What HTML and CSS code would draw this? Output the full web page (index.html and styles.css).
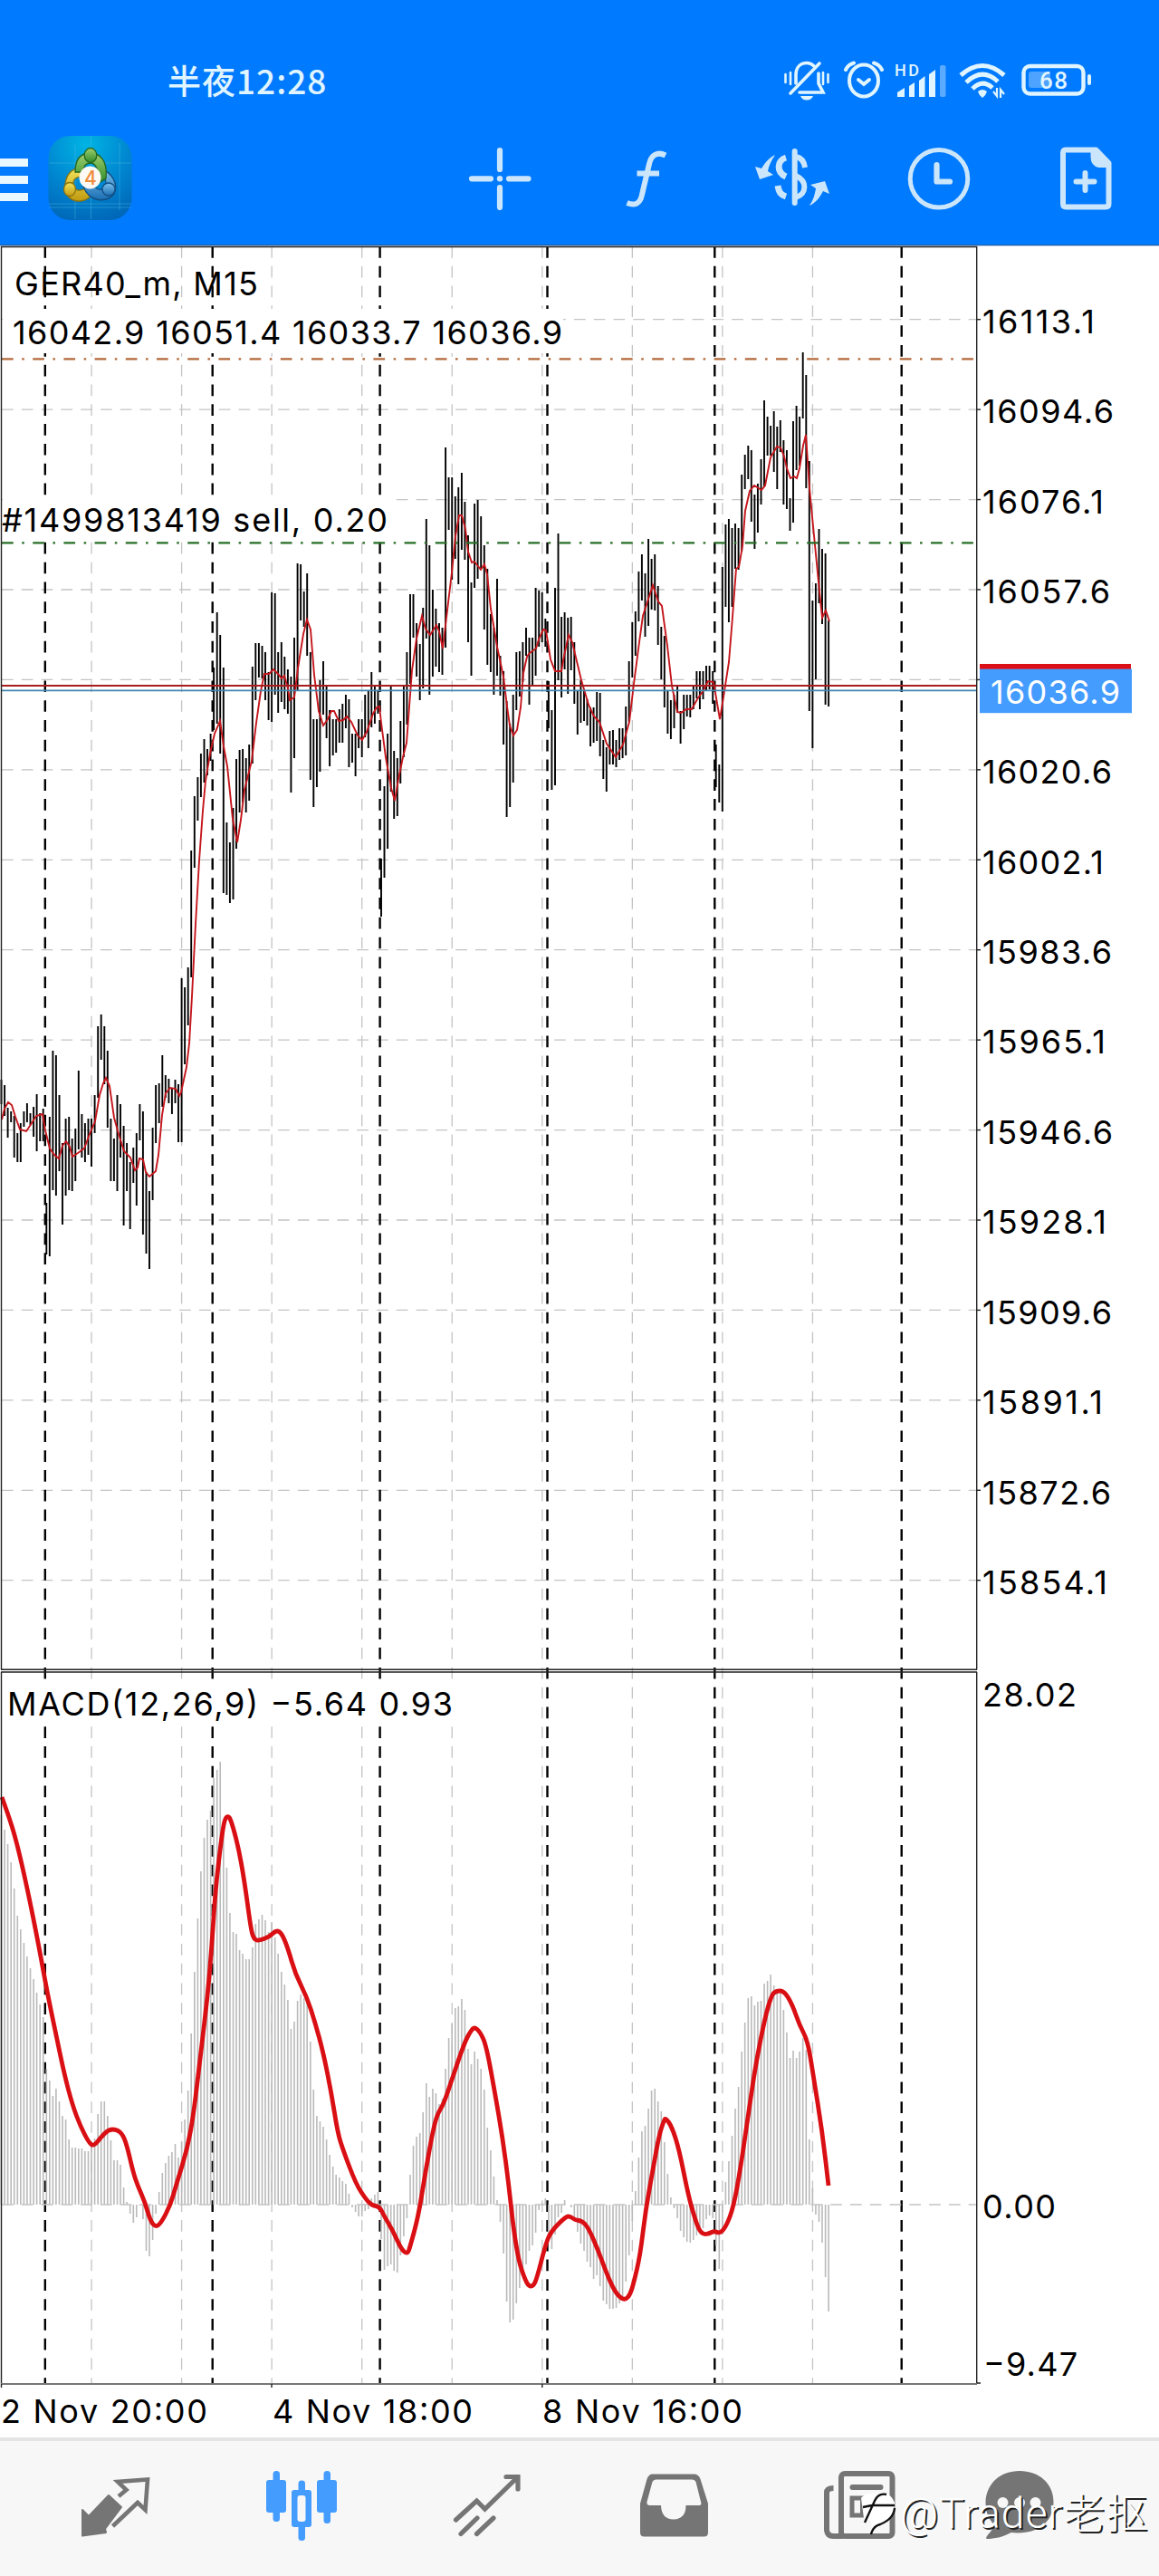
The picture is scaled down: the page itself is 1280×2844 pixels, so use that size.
FILE: index.html
```html
<!DOCTYPE html>
<html lang="zh-CN">
<head>
  <meta charset="UTF-8">
  <meta name="viewport" content="width=device-width, initial-scale=1.0">
  <title>GER40_m, M15</title>
  <link rel="stylesheet" href="styles.css">
</head>
<body>
  <!-- Header -->
  <header class="header">
    <div class="status-bar">
      <span class="time">半夜12:28</span>
      <div class="status-icons">
        <!-- Muted bell -->
        <svg width="55" height="46" viewBox="864 66 55 46">
          <g fill="none" stroke="#e0f5ff" stroke-width="3.6" stroke-linecap="round">
            <path d="M905 70 L873 103"/>
            <path d="M879 92 V83 C879 74 884 69.500 891 69.500 C894 69.500 897 71 899 73"/>
            <path d="M904 81 V92 L909 102 H883"/>
            <path stroke-width="2.600" d="M867.500 82 V91 M873 80 V93 M909 80 V93 M914.500 82 V91"/>
          </g>
          <path fill="#e0f5ff" d="M884 106 H898 Q896 110.500 891 110.500 Q886 110.500 884 106Z"/>
        </svg>
        <!-- Alarm -->
        <svg width="45" height="46" viewBox="931 66 45 46">
          <g fill="none" stroke="#e0f5ff" stroke-width="4" stroke-linecap="round">
            <ellipse cx="954" cy="89" rx="16" ry="17.500"/>
            <path d="M934 77 Q937 71 943 69.500 M974 77 Q971 71 965 69.500"/>
            <path d="M948 88 L954 93 L960 88"/>
          </g>
        </svg>
        <!-- Signal -->
        <svg width="58" height="46" viewBox="988 66 58 46">
          <text class="hd" x="988" y="84" textLength="27">HD</text>
          <g fill="#e0f5ff">
            <path d="M991 107 V102 L999 97 V107Z"/>
            <path d="M1004 107 V95 L1010 91 V107Z"/>
            <path d="M1015 107 V89 L1021.500 84 V107Z"/>
            <path d="M1026 107 V82 L1033 77 V107Z"/>
            <rect x="1038" y="72" width="6.500" height="35" rx="2" opacity=".4"/>
          </g>
        </svg>
        <!-- Wifi -->
        <svg width="56" height="46" viewBox="1058 66 56 46">
          <g fill="none" stroke="#e0f5ff" stroke-width="5">
            <path d="M1061 83 Q1085 62 1109 83"/>
            <path d="M1067 91 Q1085 74 1102 90"/>
            <path d="M1074 98 Q1085 87 1096 97"/>
          </g>
          <path fill="#e0f5ff" d="M1080 101 Q1085 97 1090 101 Q1089 105 1085 108 Q1081 105 1080 101Z"/>
          <path fill="none" stroke="#e0f5ff" stroke-width="2.200" d="M1097 101 L1101 106 V97 M1105 108 V99 L1109 104"/>
        </svg>
        <!-- Battery -->
        <svg width="80" height="46" viewBox="1126 66 80 46">
          <rect x="1136" y="79" width="24" height="18" rx="3" fill="#4da3ff"/>
          <rect x="1130.500" y="73" width="66" height="30.500" rx="7" fill="none" stroke="#e0f5ff" stroke-width="4.400"/>
          <rect x="1201" y="82" width="4" height="12" rx="2" fill="#e0f5ff"/>
          <text class="battery-level" x="1148" y="98" textLength="31">68</text>
        </svg>
      </div>
    </div>

    <div class="toolbar">
      <svg class="menu" width="31" height="94" viewBox="0 150 31 94">
        <path fill="#e9f7ff" d="M0 175 H31 V184 H0Z M0 194 H31 V203 H0Z M0 213 H31 V222 H0Z"/>
      </svg>
      <!-- MetaTrader logo -->
      <svg width="94" height="94" viewBox="53 150 94 94">
        <defs>
          <radialGradient id="tile" cx=".45" cy=".1" r="1">
            <stop offset="0" stop-color="#00b4e4"/>
            <stop offset=".55" stop-color="#0084cf"/>
            <stop offset="1" stop-color="#0063b4"/>
          </radialGradient>
          <linearGradient id="green" x1="0" y1="0" x2="0" y2="1"><stop offset="0" stop-color="#a2d070"/><stop offset="1" stop-color="#2f8a28"/></linearGradient>
          <linearGradient id="yellow" x1="0" y1="0" x2="0" y2="1"><stop offset="0" stop-color="#f2e45c"/><stop offset="1" stop-color="#c29a10"/></linearGradient>
          <linearGradient id="blue" x1="0" y1="0" x2="0" y2="1"><stop offset="0" stop-color="#7cc4ee"/><stop offset="1" stop-color="#1c6fb4"/></linearGradient>
        </defs>
        <rect x="53.500" y="150" width="92" height="93" rx="24" fill="url(#tile)"/>
        <path stroke="#4fc0e8" stroke-opacity=".4" fill="none" d="M83 160 V242 M100.500 150 V242 M132 158 V232 M54 180 H145 M54 229 H145 M54 225 H145"/>
        <g stroke-width="1.300">
          <path fill="url(#yellow)" stroke="#8b7410" d="M92 185 C78 185 71 194 72 210 C76 224 90 225 100 217 L96 207 C88 212 82 211 81 204 C80 197 86 194 94 195Z"/>
          <path fill="url(#blue)" stroke="#134e84" d="M112 187 C124 190 131 204 126 214 C118 224 99 224 92 206 L103 203 C108 213 117 210 117 203 C117 197 115 195 110 195Z"/>
          <path fill="url(#green)" stroke="#25661f" d="M83 190 C83 175 90 169 100 169 C111 169 119 178 117 197 L109 202 C109 186 106 180 100 180 C93 180 92 185 92 190Z"/>
          <ellipse cx="100" cy="171.500" rx="6.800" ry="8" fill="url(#green)" stroke="#25661f"/>
          <ellipse cx="77" cy="209" rx="6.500" ry="7.500" fill="url(#yellow)" stroke="#8b7410"/>
          <ellipse cx="120" cy="209" rx="7" ry="7" fill="url(#blue)" stroke="#134e84"/>
        </g>
        <ellipse cx="99.500" cy="196" rx="12" ry="12.500" fill="#fdfaf5"/>
        <text class="logo-digit" x="93" y="204">4</text>
      </svg>

      <div class="tools">
        <div class="tool">
          <svg width="70" height="70" viewBox="517 161 70 70">
            <path stroke="#cbe6fb" stroke-width="6.200" stroke-linecap="round" d="M552 165 V186 M552 206 V228 M521 196.300 H542 M562 196.300 H583.500"/>
            <circle cx="552" cy="196.300" r="3.200" fill="#cbe6fb"/>
          </svg>
        </div>
        <div class="tool">
          <svg width="48" height="70" viewBox="690 161 48 70">
            <path fill="none" stroke="#cbe6fb" stroke-width="6" d="M735 170.500 C726 166 719 170 717 180 L709 214 C707 224 701 226.500 692.500 223"/>
            <path stroke="#cbe6fb" stroke-width="6" d="M703.500 190.500 H728"/>
          </svg>
        </div>
        <div class="tool">
          <svg width="84" height="70" viewBox="834 161 84 70">
            <g fill="none" stroke="#cbe6fb">
              <path stroke-width="6" stroke-linecap="round" d="M878.700 166 V223"/>
              <path stroke-width="7" d="M869 173 C859 176 858 189 869 194 M860 204 C861 211 863 214 869 216"/>
              <path stroke-width="6" d="M880 172 C886 173 889 177 890 184 M880 193 C893 199 892 213 880 217"/>
            </g>
            <path fill="#cbe6fb" d="M857 170 C850 173 845 180 842 185 L835 183 L840 197 L855 192 L849 188 C850 182 853 176 857 170Z"/>
            <path fill="#cbe6fb" d="M895 226 C902 223 907 216 910 210 L917 213 L912 199 L896 203 L902 207 C901 214 899 220 895 226Z"/>
          </svg>
        </div>
        <div class="tool">
          <svg width="72" height="70" viewBox="1001 161 72 70">
            <circle cx="1037" cy="196.300" r="31.800" fill="none" stroke="#cbe6fb" stroke-width="5"/>
            <path fill="none" stroke="#cbe6fb" stroke-width="6.200" stroke-linecap="round" stroke-linejoin="round" d="M1034.500 181 V199.500 H1049"/>
          </svg>
        </div>
        <div class="tool">
          <svg width="58" height="70" viewBox="1170.500 161 58 70">
            <path fill="none" stroke="#cbe6fb" stroke-width="6" stroke-linejoin="round" d="M1177 164.500 H1211 L1225 179 V224 Q1225 227.500 1221.500 227.500 H1178 Q1174.500 227.500 1174.500 224 V168 Q1174.500 164.500 1177 164.500Z"/>
            <path fill="#cbe6fb" d="M1205 164 H1212 L1227 179 V184 H1214 Q1205 182 1205 172Z"/>
            <path stroke="#cbe6fb" stroke-width="6" stroke-linecap="round" d="M1199 190 V209 M1189 199.500 H1209"/>
          </svg>
        </div>
      </div>
    </div>
  </header>

  <!-- Chart -->
  <main class="chart">
    <svg id="plot" width="1280" height="2421" viewBox="0 270 1280 2421">
      <rect class="header-edge" x="0" y="270" width="1280" height="1.300"/>
      <g id="grid"></g>

      <!-- Labels on the price window -->
      <rect class="label-bg" x="3" y="341" width="619" height="49"/>
      <rect class="label-bg" x="3" y="547" width="430" height="49"/>
      <rect class="label-bg" x="3" y="1854" width="502" height="52"/>
      <text class="label" x="16" y="325.500" textLength="269">GER40_m, M15</text>
      <text class="label" x="14" y="380" textLength="607">16042.9 16051.4 16033.7 16036.9</text>
      <text class="label" x="2" y="586.500" textLength="426">#1499813419 sell, 0.20</text>
      <text class="label" x="8" y="1893.500" textLength="492">MACD(12,26,9) −5.64 0.93</text>

      <path class="histogram" id="histogram"/>
      <path class="grid-line" stroke-dasharray="12.7 9.090" d="M2 2434 H1079"/>
      <path class="bars" id="bars"/>
      <polyline class="ma" points="2,1236 5,1224 9,1217 13,1220 17,1233 22,1247 29,1249 35,1240 40,1232 47,1230 50,1248 55,1268 60,1275 65,1279 69,1265 73,1260 77,1266 80,1277 86,1273 93,1268 99,1252 105,1238 110,1209 114,1196 117,1190 121,1199 126,1234 131,1252 137,1271 144,1278 149,1292 152,1289 154,1279 158,1280 161,1294 165,1299 172,1293 175,1275 179,1231 183,1207 188,1201 194,1202 198,1210 200,1206 206,1178 209,1152 212,1100 216,1020 220,950 224,895 227,862 232,832 237,810 243,796 247,824 251,846 257,904 262,930 266,905 270,872 275,852 278,840 283,798 288,763 292,744 297,744 302,739 307,744 311,749 314,746 318,760 320,773 325,770 329,738 335,700 339,684 343,695 347,745 352,785 357,801 362,794 366,785 369,785 374,796 379,795 383,791 388,797 395,812 400,817 405,808 412,788 416,781 419,780 421,798 426,836 432,870 436,884 440,860 445,836 449,820 452,780 455,740 460,705 466,680 470,694 475,701 482,690 485,697 489,716 493,682 499,632 503,592 507,569 510,569 514,584 517,609 521,621 524,620 531,629 535,623 538,634 542,672 549,714 556,747 560,780 563,801 567,812 571,806 575,781 578,743 582,725 585,721 592,716 595,706 600,695 603,696 608,728 613,741 620,741 623,724 628,701 632,709 642,751 650,778 656,791 662,797 670,821 680,836 688,822 695,797 700,755 706,709 710,680 721,646 727,664 731,669 737,713 742,757 748,786 752,787 758,783 764,783 770,772 777,762 782,752 788,753 795,794 798,776 805,731 809,681 813,628 816,626 820,603 823,564 828,542 833,536 841,541 845,536 851,505 858,493 862,494 866,504 869,517 873,528 877,526 880,528 883,517 887,492 890,480 894,539 898,581 905,653 908,682 912,674 916,686"/>
      <path class="signal" id="signal"/>

      <!-- Order and quote levels -->
      <path class="stop-level" d="M2 396.300 H1076"/>
      <path class="order-level" d="M2 599.300 H1076"/>
      <path class="ask" d="M2 757 H1079"/>
      <path class="bid" d="M2 762.300 H1079"/>

      <!-- Frames -->
      <path class="frame" d="M1.500 1843.200 V272.500 H1078.700 V1843.200 M1.500 2632 V1846 M1078.700 1846 V2632"/>
      <path class="frame" d="M1 1843.200 H1079 M1 1846 H1079"/>
      <path class="frame-bottom" d="M1 2632 H1079"/>
      <path class="frame" d="M1.500 2632 V2636 M300 2632 V2636 M598.800 2632 V2636 M1079 2631 H1083"/>

      <!-- Price axis -->
      <g id="axis"></g>
      <rect x="1082" y="733" width="167" height="6" fill="#db1017"/>
      <rect x="1082" y="738.600" width="168" height="48.600" fill="#449cff"/>
      <text class="label quote" x="1094" y="777" textLength="143">16036.9</text>
      <text class="label" x="1085" y="1884" textLength="104">28.02</text>
      <text class="label" x="1085" y="2449" textLength="81">0.00</text>
      <text class="label" x="1086" y="2622.500" textLength="104">−9.47</text>

      <!-- Time axis -->
      <text class="label" x="1" y="2674.500" textLength="228">2 Nov 20:00</text>
      <text class="label" x="301" y="2674.500" textLength="221">4 Nov 18:00</text>
      <text class="label" x="599" y="2674.500" textLength="221">8 Nov 16:00</text>
    </svg>
  </main>

  <!-- Bottom navigation -->
  <nav class="nav">
    <div class="nav-item">
      <svg width="78" height="80" viewBox="89 2726 78 80">
        <path fill="#757575" stroke="#757575" stroke-width="2" stroke-linejoin="round" d="M120 2755 L134 2768 L116 2792 L117 2796 L91 2799.500 V2771 L98 2778Z"/>
        <path fill="none" stroke="#757575" stroke-width="4.600" d="M131 2756 L139.500 2749 L130 2740 L163 2737.500 L160.500 2771 L152 2763 L124.500 2789"/>
      </svg>
    </div>
    <div class="nav-item">
      <svg width="80" height="80" viewBox="292.500 2726 80 80">
        <g fill="#449cff">
          <rect x="293.500" y="2738" width="22" height="36" rx="3"/>
          <rect x="301" y="2728" width="7.500" height="56" rx="3.500"/>
          <rect x="349.500" y="2738" width="22" height="36" rx="3"/>
          <rect x="357" y="2728" width="7.500" height="58" rx="3.500"/>
          <rect x="321.500" y="2749" width="22" height="41" rx="3"/>
          <rect x="329" y="2738.500" width="7.500" height="66.500" rx="3.500"/>
        </g>
        <rect x="328" y="2755" width="9" height="29" rx="3" fill="#f7f7f7"/>
      </svg>
    </div>
    <div class="nav-item">
      <svg width="78" height="80" viewBox="499 2726 78 80">
        <path fill="none" stroke="#757575" stroke-width="5.200" stroke-linecap="round" d="M503.500 2782 L526.500 2761 L535.500 2770 L571.500 2735 M559 2734.500 H572 V2748 M509 2797.500 L527 2780 M526.500 2797.500 L545 2780"/>
      </svg>
    </div>
    <div class="nav-item">
      <svg width="78" height="80" viewBox="704.500 2726 78 80">
        <path fill="#757575" fill-rule="evenodd" d="M720 2731.500 H766 Q771 2731.500 773 2737 L781.500 2764 V2796 Q781.500 2800.500 777 2800.500 H711 Q706.500 2800.500 706.500 2796 V2764 L714 2737 Q716 2731.500 720 2731.500Z M724 2737.500 Q721 2737.500 720 2740 L714 2762 Q713.500 2766 717 2766 H729.500 Q730 2781.500 743.500 2781.500 Q757 2781 757 2766 H771 Q775 2766 773.500 2762 L768 2740 Q767 2737.500 764 2737.500Z"/>
      </svg>
    </div>
    <div class="nav-item">
      <svg width="80" height="80" viewBox="909.500 2726 80 80">
        <g fill="none" stroke="#757575" stroke-width="6">
          <rect x="929.500" y="2731" width="56.500" height="69" rx="4"/>
          <path d="M921 2747 Q913.500 2747 913.500 2752 V2793 Q914 2800 921 2800 H932"/>
          <path stroke-linecap="round" d="M942 2746 H973"/>
          <path stroke-width="5" d="M941.500 2758 H953 V2777 H941.500Z M960 2759 H975 M960 2769 H975"/>
        </g>
      </svg>
    </div>
    <div class="nav-item nav-item-last">
      <svg width="78" height="80" viewBox="1087.500 2726 78 80">
        <path fill="#757575" d="M1126.500 2728 C1148 2728 1164 2742 1164 2762 C1164 2787 1143 2799 1117 2796 C1108 2801 1099 2803 1090 2803 C1088 2800 1098 2794 1098 2787 C1091 2779 1089 2772 1089 2762 C1090 2742 1105 2728 1126.500 2728Z"/>
        <g fill="#f7f7f7"><circle cx="1108" cy="2763" r="6"/><circle cx="1126.500" cy="2763" r="6"/><circle cx="1144" cy="2763" r="6"/></g>
      </svg>
    </div>

    <div class="watermark">
      <svg width="44" height="52" viewBox="950 2754 44 52">
        <path fill="#fff" d="M951 2763 Q955 2757 972 2757 Q984 2757 988 2768 Q988 2784 973 2793 L963 2797 L962 2788 L954 2785Z"/>
        <path fill="none" stroke="#111" stroke-width="2.400" d="M979 2759 Q970 2757 966 2766 L955 2790 M953 2773 L963 2771 H988 M988 2774 Q987 2786 972 2792 Q964 2794 962 2803"/>
      </svg>
      <span class="watermark-name">@Trader老抠</span>
    </div>
  </nav>

  <script src="chart.js"></script>
</body>
</html>
```

FILE: styles.css
```css
/* General styling */
body {
  margin: 0;
  width: 1280px;
  background-color: #fff;
  font-family: Inter, "Noto Sans CJK SC", sans-serif;
  color: #000;
}

svg {
  display: block;
  flex: none;
}

/* Header */
.header {
  height: 270px;
  background-color: #007aff;
  box-sizing: border-box;
  padding-top: 66px;
}

.status-bar {
  display: flex;
  justify-content: space-between;
  align-items: center;
  height: 46px;
  padding: 0 74px 0 185px;
}

.time {
  font-family: "Noto Sans CJK SC", sans-serif;
  font-size: 37px;
  font-weight: 500;
  line-height: 42px;
  color: #e0f5ff;
  letter-spacing: 1px;
  margin-top: -3px;
}

.status-icons {
  display: flex;
  gap: 12px;
}

.hd {
  font-family: Roboto, sans-serif;
  font-size: 18px;
  font-weight: 500;
  fill: #e0f5ff;
}

.battery-level {
  font-family: Roboto, sans-serif;
  font-size: 26px;
  font-weight: 500;
  fill: #e0f5ff;
}

.toolbar {
  display: flex;
  align-items: center;
  margin-top: 38px;
  height: 94px;
}

.menu {
  margin-right: 22px;
}

.logo-digit {
  font-size: 21px;
  font-weight: 500;
  fill: #f08a3c;
}

.tools {
  display: flex;
  margin-left: 324px;
}

.tool {
  width: 161.8px;
  display: flex;
  justify-content: center;
}

/* Chart */
.chart {
  height: 2421px;
}

.label {
  font-family: Inter, sans-serif;
  font-size: 36px;
  fill: #000;
}

.quote {
  fill: #fff;
}

.label-bg {
  fill: #fff;
}

.header-edge {
  fill: #1c62b0;
}

.grid-line {
  fill: none;
  stroke: #c4c4c4;
  stroke-width: 1.3;
}

.day-line {
  fill: none;
  stroke: #000;
  stroke-width: 2.4;
}

.frame {
  fill: none;
  stroke: #222;
  stroke-width: 1.4;
}

.frame-bottom {
  stroke: #777;
  stroke-width: 2;
}

.bars {
  stroke: #000;
  stroke-width: 1.9;
}

.ma {
  fill: none;
  stroke: #c4161c;
  stroke-width: 1.9;
}

.histogram {
  stroke: #bababa;
  stroke-width: 1.6;
}

.signal {
  fill: none;
  stroke: #d90f14;
  stroke-width: 4.8;
  stroke-linejoin: round;
}

.stop-level,
.order-level {
  fill: none;
  stroke-width: 2.2;
  stroke-dasharray: 12.7 9.5 2.6 9.4;
}

.stop-level {
  stroke: #b3683a;
}

.order-level {
  stroke: #266e26;
}

.ask {
  stroke: #a81c20;
  stroke-width: 2;
}

.bid {
  stroke: #3f86b0;
  stroke-width: 1.8;
}

/* Bottom navigation */
.nav {
  position: relative;
  display: flex;
  height: 153px;
  box-sizing: border-box;
  border-top: 4px solid #e4e4e4;
  background-color: #f7f7f7;
  padding: 31px 0 0 25px;
}

.nav-item {
  width: 205.4px;
  display: flex;
  justify-content: center;
}

.nav-item-last {
  width: 149px;
}

/* Author mark over the last two tabs */
.watermark {
  position: absolute;
  left: 950px;
  top: 50px;
  display: flex;
  align-items: center;
}

.watermark-name {
  font-family: Roboto, "Noto Sans CJK SC", sans-serif;
  font-size: 46px;
  font-weight: 300;
  line-height: 60px;
  letter-spacing: 1.2px;
  color: #fff;
  text-shadow: 2px 2px 0 #222;
  white-space: nowrap;
}
```

FILE: chart.js
```js
const NS = 'http://www.w3.org/2000/svg';
const LEFT = 1.5;
const STEP = 3.555;
const ZERO = 2434;

// top and bottom of every bar
const bars = [
  [1192,1219],[1198,1232],[1223,1256],[1227,1239],[1232,1278],[1251,1283],[1240,1283],[1227,1244],[1218,1239],[1229,1242],
  [1222,1255],[1208,1271],[1229,1260],[1224,1260],[1328,1385],[1233,1387],[1160,1314],[1165,1320],[1209,1293],[1262,1352],
  [1235,1320],[1233,1314],[1257,1315],[1246,1304],[1182,1269],[1230,1278],[1240,1283],[1235,1275],[1235,1288],[1209,1251],
  [1133,1212],[1120,1170],[1133,1197],[1160,1245],[1235,1304],[1257,1304],[1209,1315],[1219,1278],[1243,1353],[1262,1315],
  [1283,1357],[1267,1306],[1251,1331],[1219,1259],[1227,1363],[1294,1384],[1315,1401],[1245,1325],[1198,1262],[1196,1240],
  [1165,1222],[1187,1212],[1191,1218],[1201,1230],[1192,1218],[1197,1261],[1080,1261],[1090,1175],[1068,1132],[939,1079],
  [879,958],[858,906],[832,880],[816,864],[827,856],[810,840],[737,806],[676,799],[701,832],[737,986],
  [908,988],[930,997],[892,993],[838,937],[828,897],[827,886],[837,897],[822,884],[736,843],[710,773],
  [710,748],[713,749],[720,773],[742,795],[654,797],[655,767],[720,787],[709,775],[725,783],[739,788],
  [747,875],[704,837],[622,762],[623,685],[653,692],[633,724],[720,861],[794,891],[794,869],[751,852],
  [730,789],[757,815],[784,846],[794,834],[794,831],[783,820],[777,820],[767,804],[772,847],[810,842],
  [810,857],[794,826],[794,836],[767,814],[762,826],[742,803],[757,799],[762,788],[948,1012],[868,969],
  [810,937],[756,874],[829,904],[837,901],[796,865],[757,836],[720,800],[656,755],[656,704],[688,747],
  [711,773],[671,760],[573,705],[602,767],[651,747],[672,736],[688,742],[693,745],[494,715],[527,585],
  [527,640],[548,617],[538,645],[522,607],[554,618],[591,709],[643,746],[556,649],[552,639],[570,627],
  [602,695],[628,734],[678,742],[693,767],[639,746],[724,768],[741,822],[774,902],[799,891],[767,864],
  [720,784],[719,769],[709,753],[693,724],[704,778],[704,757],[649,746],[652,714],[654,709],[683,714],
  [752,804],[784,872],[649,867],[589,751],[681,770],[676,739],[682,766],[681,740],[709,777],[762,811],
  [751,798],[762,796],[772,801],[781,824],[781,820],[764,818],[765,835],[817,860],[825,874],[807,844],
  [806,844],[817,847],[804,839],[804,837],[780,834],[730,797],[687,748],[675,724],[631,686],[612,663],
  [633,703],[595,691],[617,673],[612,674],[647,712],[692,750],[702,781],[763,810],[773,816],[767,804],
  [757,787],[785,821],[767,805],[767,791],[767,792],[758,783],[741,771],[741,783],[741,772],[735,762],
  [735,761],[741,777],[822,869],[844,886],[626,896],[579,670],[573,687],[583,670],[578,628],[583,629],
  [524,609],[502,540],[492,529],[497,576],[546,606],[534,588],[507,557],[442,537],[460,503],[470,503],
  [454,521],[471,540],[464,499],[486,557],[497,562],[550,586],[465,577],[448,519],[460,514],[389,462],
  [414,539],[509,785],[663,826],[644,750],[584,666],[606,689],[611,778],[685,780]
];

// MACD columns
const macd = [
  2004,2020,2036,2056,2085,2115,2130,2145,2160,2173,2185,2200,2213,2227,2284,2297,2314,2306,2320,2336,
  2340,2362,2371,2371,2372,2372,2375,2375,2370,2361,2334,2320,2320,2336,2363,2385,2385,2390,2415,2431,
  2444,2454,2448,2435,2450,2485,2491,2473,2444,2420,2399,2388,2380,2376,2367,2382,2365,2340,2308,2245,
  2177,2118,2066,2029,2009,1999,1963,1954,1945,2016,2062,2112,2133,2135,2153,2157,2163,2163,2150,2124,
  2119,2114,2120,2133,2122,2139,2157,2177,2191,2208,2240,2232,2209,2202,2206,2212,2254,2307,2336,2342,
  2348,2362,2379,2392,2401,2404,2408,2411,2422,2437,2442,2447,2447,2441,2439,2427,2423,2420,2472,2506,
  2502,2500,2507,2509,2490,2469,2449,2401,2369,2359,2355,2332,2300,2315,2306,2311,2323,2317,2284,2250,
  2234,2217,2215,2207,2219,2262,2279,2265,2273,2284,2307,2349,2374,2403,2429,2453,2488,2541,2564,2561,
  2543,2526,2513,2500,2485,2479,2465,2440,2432,2427,2468,2483,2467,2448,2443,2429,2434,2437,2450,2464,
  2477,2485,2497,2503,2516,2512,2524,2540,2544,2549,2549,2548,2543,2538,2519,2490,2452,2419,2382,2353,
  2347,2328,2308,2306,2320,2331,2365,2400,2426,2438,2449,2463,2470,2475,2476,2473,2468,2465,2460,2450,
  2446,2449,2479,2505,2467,2409,2386,2358,2328,2304,2265,2233,2206,2204,2214,2210,2209,2190,2187,2180,
  2192,2197,2201,2219,2244,2272,2264,2272,2265,2250,2263,2362,2416,2445,2453,2476,2514,2552
];

// MACD signal line
const signal = [
  [2,1984],[9,2003],[18,2032],[30,2084],[43,2149],[52,2199],[61,2242],[71,2290],[80,2324],[89,2348],[99,2367],[104,2369],
  [112,2359],[120,2351],[129,2351],[136,2357],[141,2372],[147,2398],[152,2413],[160,2431],[166,2452],[172,2459],[178,2454],
  [188,2435],[195,2411],[207,2372],[214,2333],[221,2272],[229,2207],[234,2147],[238,2086],[244,2034],[248,2008],[252,2005],
  [255,2009],[263,2038],[270,2077],[277,2129],[280,2140],[285,2143],[298,2138],[305,2131],[311,2134],[318,2151],[326,2179],
  [339,2205],[348,2233],[357,2266],[366,2311],[373,2355],[379,2374],[393,2411],[404,2428],[411,2435],[419,2436],[425,2448],
  [434,2463],[443,2483],[450,2489],[453,2480],[462,2447],[470,2397],[478,2353],[483,2334],[490,2323],[500,2293],[513,2255],
  [520,2242],[524,2238],[530,2243],[537,2258],[547,2313],[555,2360],[562,2413],[567,2460],[573,2497],[580,2517],[584,2524],
  [589,2524],[593,2515],[602,2480],[608,2464],[625,2447],[630,2447],[635,2451],[643,2452],[650,2460],[660,2483],[670,2510],
  [678,2528],[685,2537],[691,2539],[696,2533],[700,2520],[707,2490],[713,2440],[722,2390],[728,2357],[733,2342],[735,2338],
  [742,2348],[750,2373],[760,2423],[767,2448],[772,2462],[777,2467],[783,2466],[789,2463],[795,2466],[802,2458],[810,2437],
  [818,2393],[827,2330],[835,2277],[845,2227],[852,2203],[857,2198],[866,2198],[875,2213],[883,2236],[892,2253],[898,2290],
  [908,2353],[915,2413]
];

// label text and its width
const prices = [
  ['16113.1', 124], ['16094.6', 145], ['16076.1', 134], ['16057.6', 141], ['', 0],
  ['16020.6', 143], ['16002.1', 134], ['15983.6', 143], ['15965.1', 136], ['15946.6', 144],
  ['15928.1', 137], ['15909.6', 143], ['15891.1', 133], ['15872.6', 142], ['15854.1', 138]
];

function add(parent, tag, attrs) {
  const el = document.createElementNS(NS, tag);
  for (const key in attrs) el.setAttribute(key, attrs[key]);
  parent.appendChild(el);
  return el;
}

const x = i => (LEFT + i * STEP).toFixed(1);

document.getElementById('bars').setAttribute('d',
  bars.map((b, i) => `M${x(i)} ${b[0]}V${b[1]}`).join(''));

document.getElementById('histogram').setAttribute('d',
  macd.map((y, i) => `M${x(i)} ${ZERO}V${y}`).join(''));

// smooth the signal through the middle of each pair of points
let d = `M${signal[0]}`;
for (let i = 1; i < signal.length - 1; i++) {
  const mx = (signal[i][0] + signal[i + 1][0]) / 2;
  const my = (signal[i][1] + signal[i + 1][1]) / 2;
  d += `Q${signal[i]} ${mx} ${my}`;
}
document.getElementById('signal').setAttribute('d', d + `L${signal[signal.length - 1]}`);

// Grid
const grid = document.getElementById('grid');
const dash = '12.7 9.09';
for (let i = 1; i <= 9; i++) {
  add(grid, 'path', { class: 'grid-line', 'stroke-dasharray': dash, d: `M${LEFT + i * 99.55} 272V2632` });
}
const axis = document.getElementById('axis');
prices.forEach(([text, width], i) => {
  const y = 352.7 + i * 99.43;
  add(grid, 'path', { class: 'grid-line', 'stroke-dasharray': dash, d: `M2 ${y}H1079` });
  add(axis, 'path', { class: 'frame', d: `M1079 ${y}H1083` });
  if (text) {
    add(axis, 'text', { class: 'label', x: 1085, y: y + 15.3, textLength: width }).textContent = text;
  }
});
[49.8, 234.7, 419.6, 604.5, 789.3, 995.7].forEach(dx => {
  add(grid, 'path', { class: 'day-line', 'stroke-dasharray': dash, d: `M${dx} 272V2632` });
});
```
